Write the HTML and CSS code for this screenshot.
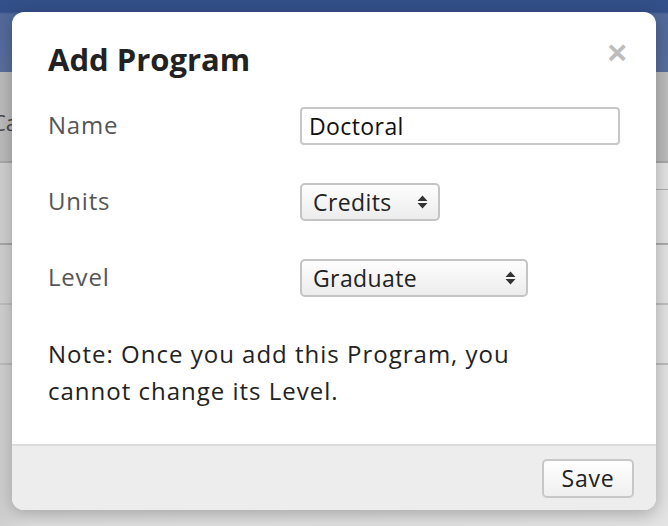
FILE: index.html
```html
<!DOCTYPE html>
<html>
<head>
<meta charset="utf-8">
<link rel="stylesheet" href="styles.css">
</head>
<body>
<div class="page">
  <div class="topbar"></div>
  <div class="toolbar"><span class="crumb">Catalog</span></div>
  <div class="rows">
    <div class="row r1"><div class="field"></div></div>
    <div class="row r2"></div>
    <div class="row r3"></div>
    <div class="row r4"></div>
  </div>
</div>
<div class="modal">
  <div class="modal-body">
    <div class="modal-head">
      <h1 class="title">Add Program</h1>
      <span class="close">&times;</span>
    </div>
    <div class="form-row">
      <label class="label">Name</label>
      <input class="text-input" type="text" value="Doctoral">
    </div>
    <div class="form-row">
      <label class="label">Units</label>
      <div class="select select-units"><span>Credits</span><svg class="arrows" width="11" height="16" viewBox="0 0 11 16"><path d="M0.5 7 L5.5 1.5 L10.5 7 Z M0.5 9 L5.5 14.5 L10.5 9 Z" fill="#333"/></svg></div>
    </div>
    <div class="form-row">
      <label class="label">Level</label>
      <div class="select select-level"><span>Graduate</span><svg class="arrows" width="11" height="16" viewBox="0 0 11 16"><path d="M0.5 7 L5.5 1.5 L10.5 7 Z M0.5 9 L5.5 14.5 L10.5 9 Z" fill="#333"/></svg></div>
    </div>
    <p class="note">Note: Once you add this Program, you cannot change its Level.</p>
  </div>
  <div class="modal-foot">
    <button class="btn">Save</button>
  </div>
</div>
</body>
</html>
```

FILE: styles.css
```css
* { box-sizing: border-box; }
html, body { margin: 0; padding: 0; }
body {
  width: 668px;
  height: 526px;
  overflow: hidden;
  position: relative;
  font-family: "Open Sans", "Lato", sans-serif;
  background: #d6d6d6;
}
.page { display: flex; flex-direction: column; height: 526px; overflow: hidden; }
.topbar {
  height: 72px;
  background: linear-gradient(#34508a 0px, #34508a 12px, #52699a 14px, #5a6f9d 72px);
}
.toolbar {
  height: 91px;
  background: #bcbcbc;
  border-bottom: 2px solid #a9a9a9;
  display: flex;
  align-items: center;
  overflow: hidden;
}
.crumb {
  margin-left: -8px;
  margin-top: 10px;
  font-size: 22px;
  color: #4a4a4a;
  white-space: nowrap;
}
.rows { flex: 1; background: linear-gradient(90deg, #cfcfcf, #dedede 30px, #e4e4e4); }
.row { border-bottom: 2px solid #b4b4b4; position: relative; }
.r1 { height: 82px; border-bottom-color: #a8a8a8; }
.r2 { height: 60px; border-bottom-color: #c0c0c0; }
.r3 { height: 60px; border-bottom-color: #bdbdbd; }
.r4 { height: 60px; border-bottom: none; }
.field {
  position: absolute;
  right: -20px;
  top: 26px;
  width: 60px;
  height: 56px;
  border: 1px solid #b0b0b0;
  border-radius: 6px;
}
.modal {
  position: absolute;
  left: 12px;
  top: 12px;
  width: 644px;
  height: 498px;
  background: #fff;
  border-radius: 12px;
  box-shadow: 0 4px 18px rgba(0,0,0,0.28);
  display: flex;
  flex-direction: column;
  overflow: hidden;
}
.modal-body {
  flex: 1;
  padding: 26px 36px 0 36px;
}
.modal-head {
  display: flex;
  justify-content: space-between;
  align-items: flex-start;
  height: 69px;
}
.title {
  margin: 0;
  font-size: 31px;
  font-weight: 700;
  color: #222;
  line-height: 42px;
  letter-spacing: 0px;
}
.close {
  font-size: 34px;
  line-height: 24px;
  color: #bdbdbd;
  font-weight: 700;
  margin-right: -7px;
  margin-top: 2px;
  font-family: "Liberation Sans", sans-serif;
}
.form-row {
  display: flex;
  align-items: center;
  height: 38px;
  margin-bottom: 38px;
}
.label {
  width: 252px;
  font-size: 24px;
  letter-spacing: 0.8px;
  color: #555;
  margin-top: -3px;
}
.text-input {
  width: 320px;
  height: 38px;
  border: 2px solid #c8c8c8;
  border-radius: 4px;
  font-family: inherit;
  font-size: 23px;
  letter-spacing: 0.4px;
  color: #111;
  padding: 0 7px;
  outline: none;
}
.select {
  height: 38px;
  border: 2px solid #c4c4c4;
  border-radius: 5px;
  background: linear-gradient(#fdfdfd, #ececec);
  display: flex;
  align-items: center;
  justify-content: space-between;
  padding: 0 10px 0 11px;
  font-size: 23px;
  letter-spacing: 0.4px;
  color: #222;
}
.select-units { width: 140px; }
.select-level { width: 228px; }
.arrows { display: block; }
.note {
  margin: 6px 0 0 0;
  width: 500px;
  font-size: 24px;
  letter-spacing: 1px;
  line-height: 37px;
  color: #222;
}
.modal-foot {
  height: 66px;
  background: #ededed;
  border-top: 2px solid #dcdcdc;
  display: flex;
  justify-content: flex-end;
  align-items: center;
  padding-right: 22px;
}
.btn {
  width: 92px;
  height: 39px;
  border: 2px solid #c8c8c8;
  border-radius: 5px;
  background: linear-gradient(#ffffff, #efefef);
  font-family: inherit;
  font-size: 23px;
  letter-spacing: 0.8px;
  color: #222;
  padding: 0;
}
```
